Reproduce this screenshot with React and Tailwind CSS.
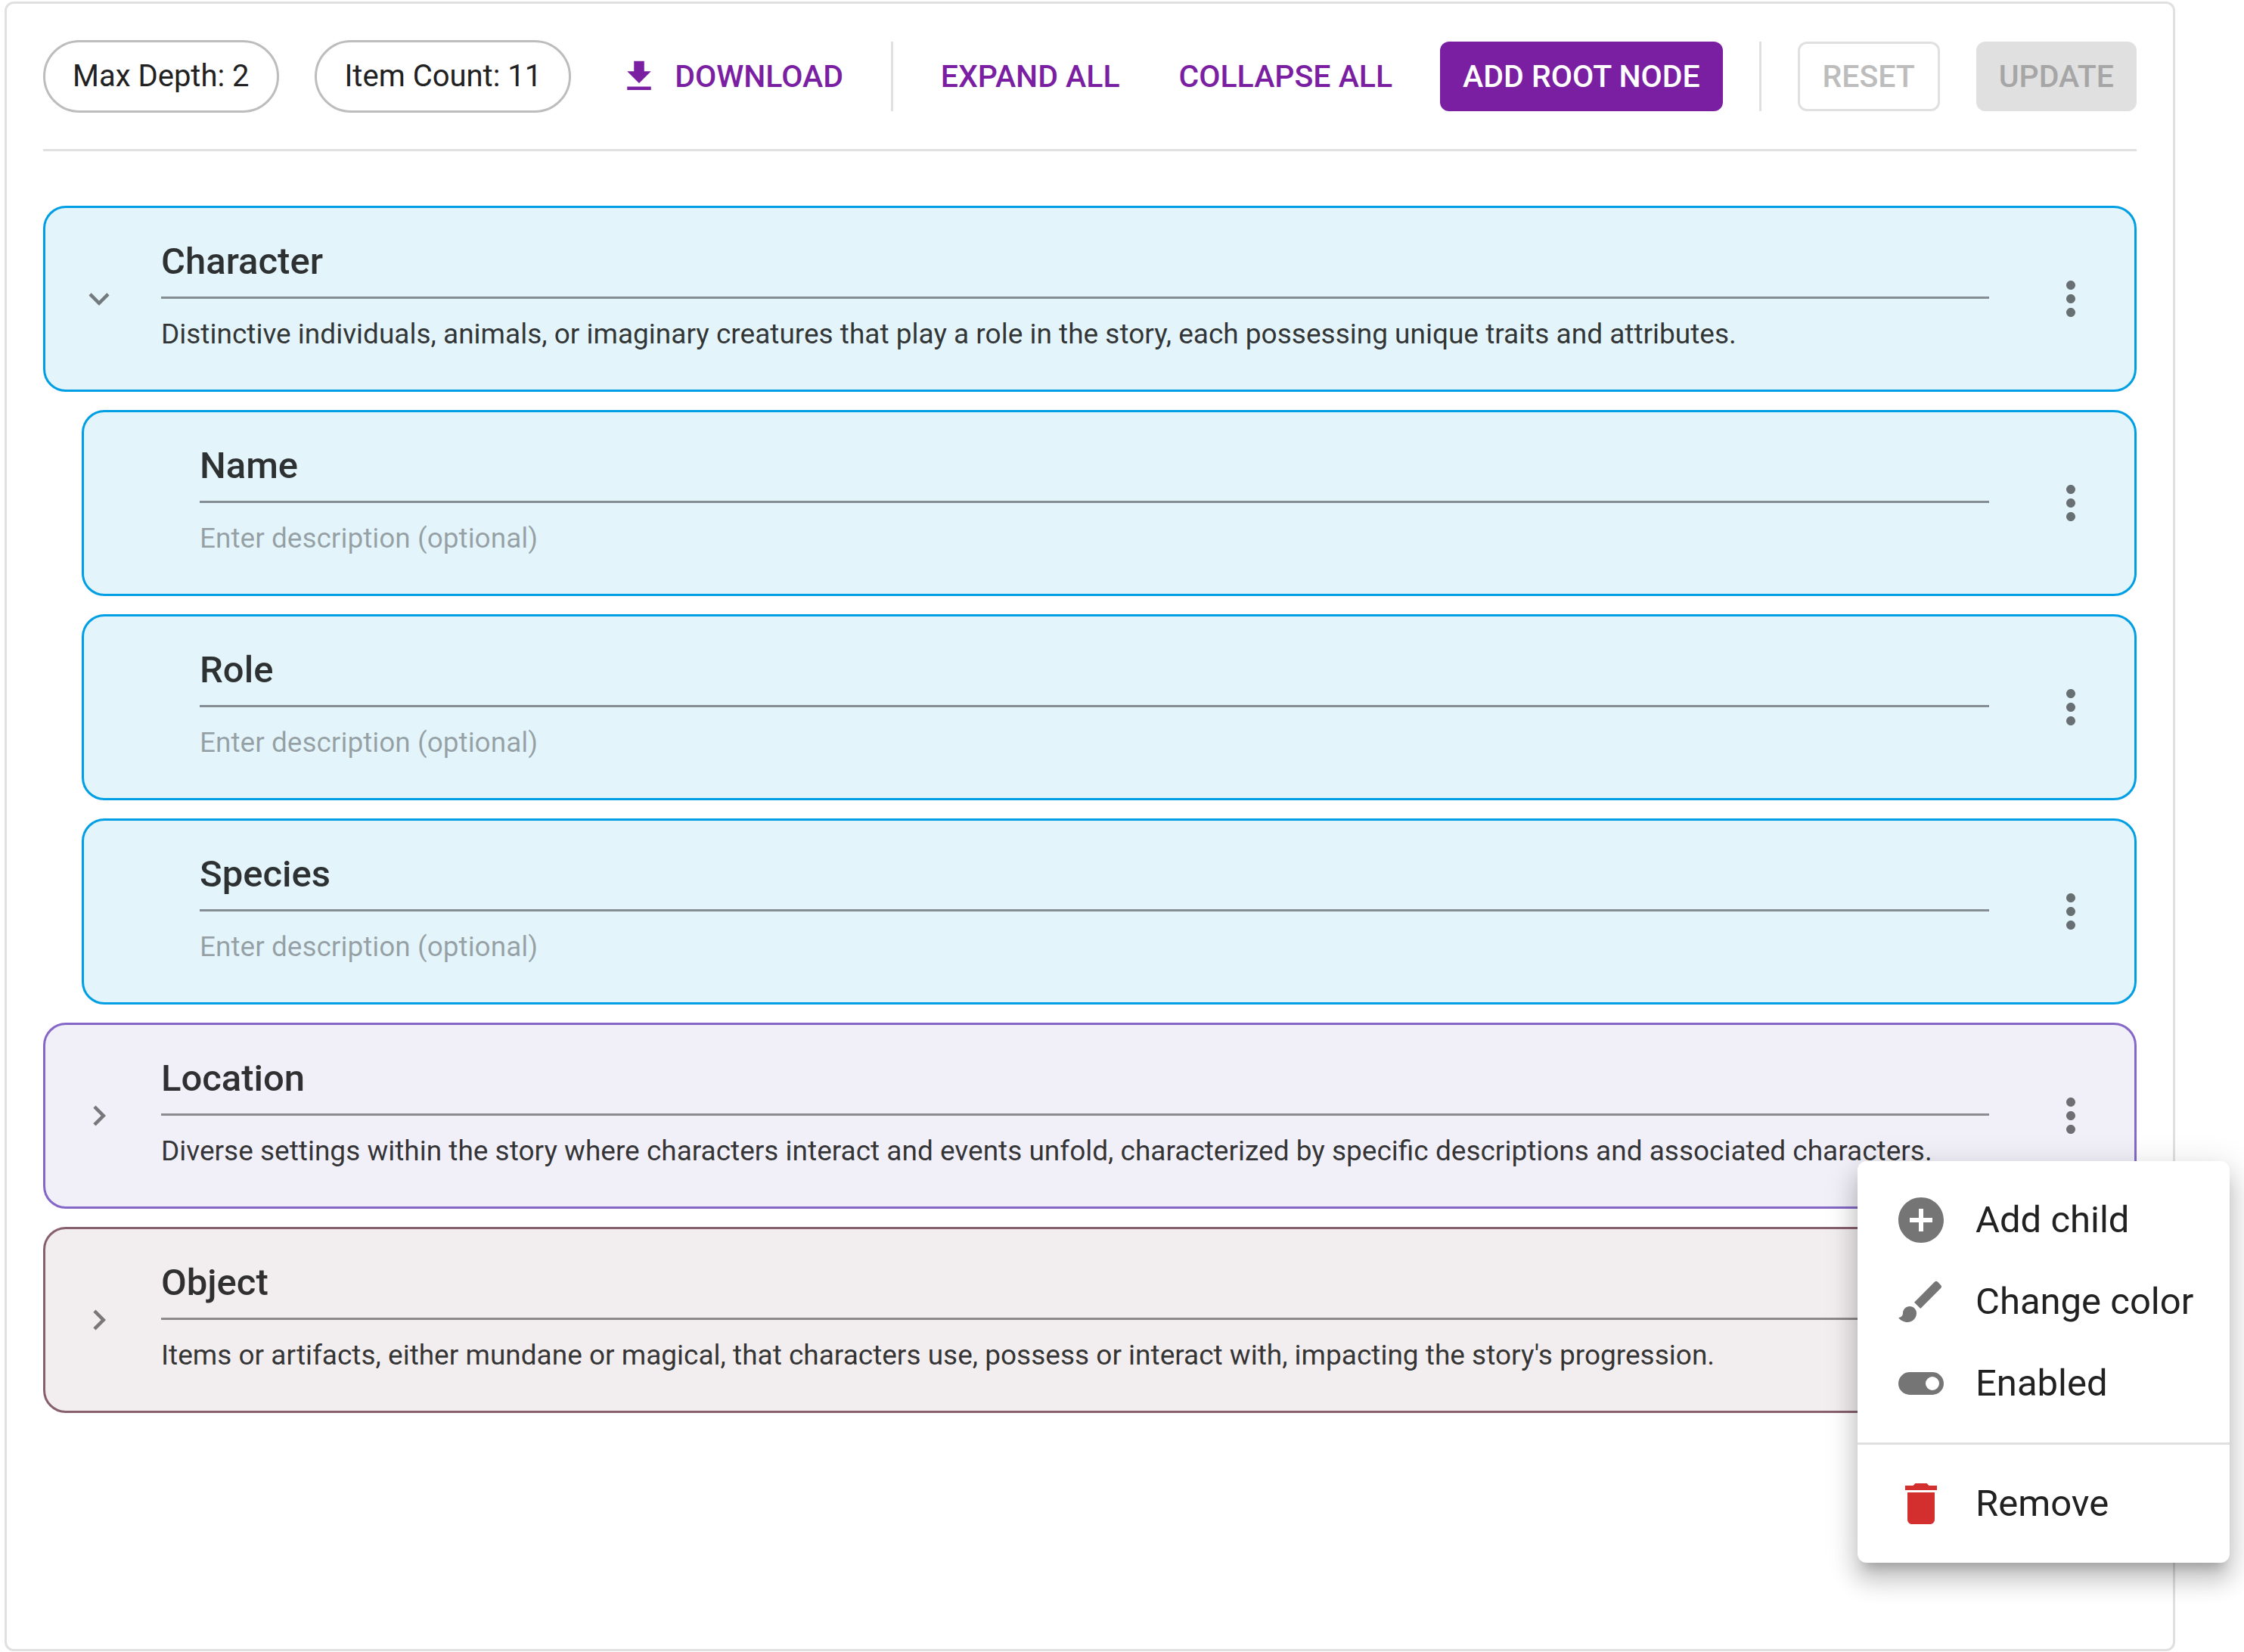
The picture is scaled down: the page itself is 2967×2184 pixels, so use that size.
const ICONS = {
  download: "M5 20h14v-2H5v2zM19 9h-4V3H9v6H5l7 7 7-7z",
  expanded: "M16.59 8.59 12 13.17 7.41 8.59 6 10l6 6 6-6z",
  collapsed: "M10 6 8.59 7.41 13.17 12l-4.58 4.59L10 18l6-6z",
  more: "M12 8c1.1 0 2-.9 2-2s-.9-2-2-2-2 .9-2 2 .9 2 2 2zm0 2c-1.1 0-2 .9-2 2s.9 2 2 2 2-.9 2-2-.9-2-2-2zm0 6c-1.1 0-2 .9-2 2s.9 2 2 2 2-.9 2-2-.9-2-2-2z",
  add: "M12 2C6.48 2 2 6.48 2 12s4.48 10 10 10 10-4.48 10-10S17.52 2 12 2zm5 11h-4v4h-2v-4H7v-2h4V7h2v4h4v2z",
  brush:
    "M7 14c-1.66 0-3 1.34-3 3 0 1.31-1.16 2-2 2 .92 1.22 2.49 2 4 2 2.21 0 4-1.79 4-4 0-1.66-1.34-3-3-3zm13.71-9.37-1.34-1.34a.9959.9959 0 0 0-1.41 0L9 12.25 11.75 15l8.96-8.96c.39-.39.39-1.02 0-1.41z",
  toggle:
    "M17 7H7a5 5 0 0 0-5 5 5 5 0 0 0 5 5h10a5 5 0 0 0 5-5 5 5 0 0 0-5-5zm0 8a3 3 0 0 1-3-3 3 3 0 0 1 3-3 3 3 0 0 1 3 3 3 3 0 0 1-3 3z",
  trash: "M6 19c0 1.1.9 2 2 2h8c1.1 0 2-.9 2-2V7H6v12zM19 4h-3.5l-1-1h-5l-1 1H5v2h14V4z",
};

function Icon({ name, className }) {
  return (
    <svg viewBox="0 0 24 24" fill="currentColor" aria-hidden="true" className={className}>
      <path d={ICONS[name]} />
    </svg>
  );
}

const TONES = {
  blue: "border-[#009fe3] bg-[#e4f4fb]",
  violet: "border-[#8467c6] bg-[#f1f0f9]",
  rose: "border-[#875f6d] bg-[#f2eeef]",
};

const NODES = [
  {
    name: "Character",
    tone: "blue",
    open: true,
    description:
      "Distinctive individuals, animals, or imaginary creatures that play a role in the story, each possessing unique traits and attributes.",
    children: [
      { name: "Name", tone: "blue" },
      { name: "Role", tone: "blue" },
      { name: "Species", tone: "blue" },
    ],
  },
  {
    name: "Location",
    tone: "violet",
    open: false,
    menu: true,
    description:
      "Diverse settings within the story where characters interact and events unfold, characterized by specific descriptions and associated characters.",
  },
  {
    name: "Object",
    tone: "rose",
    open: false,
    description:
      "Items or artifacts, either mundane or magical, that characters use, possess or interact with, impacting the story's progression.",
  },
];

function MenuItem({ icon, label, iconClass = "text-[#757575]" }) {
  return (
    <button type="button" role="menuitem" className="flex h-[108px] w-full items-center gap-9 px-12 text-left">
      <Icon name={icon} className={`size-[72px] shrink-0 ${iconClass}`} />
      <span className="whitespace-nowrap text-[49px] leading-[72px]">{label}</span>
    </button>
  );
}

function NodeMenu() {
  return (
    <div
      role="menu"
      className="absolute top-full right-[-150px] z-10 w-[492px] rounded-xl bg-white py-6 text-[#212121] shadow-[0_15px_15px_-9px_rgba(0,0,0,0.2),0_24px_30px_3px_rgba(0,0,0,0.14),0_9px_42px_6px_rgba(0,0,0,0.12)]"
    >
      <MenuItem icon="add" label="Add child" />
      <MenuItem icon="brush" label="Change color" />
      <MenuItem icon="toggle" label="Enabled" />
      <hr className="my-6 border-t-[3px] border-[#e0e0e0]" />
      <MenuItem icon="trash" label="Remove" iconClass="text-[#d32f2f]" />
    </div>
  );
}

function NodeCard({ node }) {
  const hasToggle = node.open !== undefined;
  return (
    <div className={`flex items-center rounded-[30px] border-[3px] py-6 pr-6 pl-[29px] ${TONES[node.tone]}`}>
      <div className="mr-10 size-[84px] shrink-0">
        {hasToggle && (
          <button
            type="button"
            aria-expanded={node.open}
            aria-label={`Toggle ${node.name}`}
            className="flex size-full items-center justify-center text-[#000000]/50"
          >
            <Icon name={node.open ? "expanded" : "collapsed"} className="size-[54px]" />
          </button>
        )}
      </div>
      <div className="flex min-w-0 grow flex-col">
        <input
          aria-label={`${node.name} label`}
          defaultValue={node.name}
          className="h-24 w-full border-b-[3px] border-[#000000]/42 py-3 text-[49px] font-medium leading-[69px] text-[#000000]/80 outline-none"
        />
        <input
          aria-label={`${node.name} description`}
          defaultValue={node.description}
          placeholder="Enter description (optional)"
          className="h-24 w-full pt-3 pb-[15px] text-[37px] leading-[69px] text-[#000000]/80 outline-none placeholder:text-[#000000]/34"
        />
      </div>
      <div className="relative ml-12 shrink-0">
        <button
          type="button"
          aria-label={`${node.name} options`}
          className="flex size-[120px] items-center justify-center text-[#000000]/54"
        >
          <Icon name="more" className="size-[72px]" />
        </button>
        {node.menu && <NodeMenu />}
      </div>
    </div>
  );
}

function Tree({ nodes }) {
  return (
    <ul className="flex flex-col gap-6">
      {nodes.map((node) => (
        <li key={node.name} className="flex flex-col gap-6">
          <NodeCard node={node} />
          {node.children && (
            <div className="pl-[51px]">
              <Tree nodes={node.children} />
            </div>
          )}
        </li>
      ))}
    </ul>
  );
}

function Chip({ children }) {
  return (
    <span className="flex h-24 items-center rounded-full border-[3px] border-[#bdbdbd] px-9 text-[40px] leading-[60px] text-[#212121]">
      {children}
    </span>
  );
}

const BUTTON = "flex h-[92px] items-center rounded-xl text-[41px] font-medium leading-[68px]";

function Rule() {
  return <div className="h-[92px] w-[3px] bg-[#e0e0e0]" />;
}

export default function App() {
  return (
    <main className="min-h-screen bg-white pt-0.5 pr-[91px] pb-px pl-1.5 font-[Roboto,sans-serif]">
      <section className="min-h-[2181px] rounded-xl border-[3px] border-[#e0e0e0] p-12">
        <header className="flex items-center justify-between whitespace-nowrap border-b-[3px] border-[#e0e0e0] pb-12">
          <Chip>Max Depth: 2</Chip>
          <Chip>Item Count: 11</Chip>
          <button type="button" className={`${BUTTON} gap-5 px-[15px] text-[#7b1fa2]`}>
            <Icon name="download" className="size-[54px]" />
            DOWNLOAD
          </button>
          <Rule />
          <button type="button" className={`${BUTTON} px-[15px] text-[#7b1fa2]`}>
            EXPAND ALL
          </button>
          <button type="button" className={`${BUTTON} px-[15px] text-[#7b1fa2]`}>
            COLLAPSE ALL
          </button>
          <button type="button" className={`${BUTTON} bg-[#7b1fa2] px-[30px] text-white`}>
            ADD ROOT NODE
          </button>
          <Rule />
          <button type="button" disabled className={`${BUTTON} border-[3px] border-[#e0e0e0] px-[30px] text-[#bdbdbd]`}>
            RESET
          </button>
          <button type="button" disabled className={`${BUTTON} bg-[#e0e0e0] px-[30px] text-[#a6a6a6]`}>
            UPDATE
          </button>
        </header>
        <div className="pt-[72px]">
          <Tree nodes={NODES} />
        </div>
      </section>
    </main>
  );
}
